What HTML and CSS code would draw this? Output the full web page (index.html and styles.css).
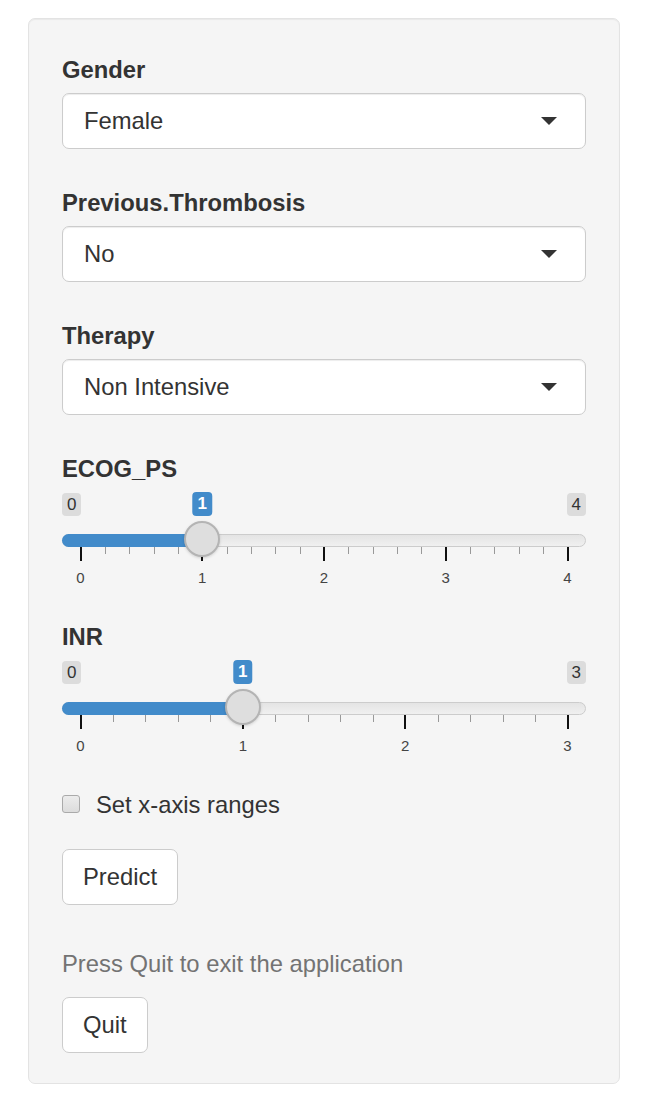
FILE: index.html
```html
<!DOCTYPE html>
<html>
<head>
    <title>Prediction Inputs</title>
    <link rel="stylesheet" href="styles.css">
</head>
<body>
    <div class="well">
        <div class="form-group">
            <label class="control-label">Gender</label>
            <div class="select"><span>Female</span><span class="caret"></span></div>
        </div>

        <div class="form-group">
            <label class="control-label">Previous.Thrombosis</label>
            <div class="select"><span>No</span><span class="caret"></span></div>
        </div>

        <div class="form-group">
            <label class="control-label">Therapy</label>
            <div class="select"><span>Non Intensive</span><span class="caret"></span></div>
        </div>

        <div class="form-group">
            <label class="control-label">ECOG_PS</label>
            <div class="slider">
                <span class="irs-min">0</span>
                <span class="irs-max">4</span>
                <div class="irs-line"></div>
                <div class="irs-bar" style="width: calc(18.5px + (100% - 37px) * 0.25)"></div>
                <div class="rail">
                    <span class="tick major" style="left: 0%"><b>0</b></span>
                    <span class="tick" style="left: 5%"></span>
                    <span class="tick" style="left: 10%"></span>
                    <span class="tick" style="left: 15%"></span>
                    <span class="tick" style="left: 20%"></span>
                    <span class="tick major" style="left: 25%"><b>1</b></span>
                    <span class="tick" style="left: 30%"></span>
                    <span class="tick" style="left: 35%"></span>
                    <span class="tick" style="left: 40%"></span>
                    <span class="tick" style="left: 45%"></span>
                    <span class="tick major" style="left: 50%"><b>2</b></span>
                    <span class="tick" style="left: 55%"></span>
                    <span class="tick" style="left: 60%"></span>
                    <span class="tick" style="left: 65%"></span>
                    <span class="tick" style="left: 70%"></span>
                    <span class="tick major" style="left: 75%"><b>3</b></span>
                    <span class="tick" style="left: 80%"></span>
                    <span class="tick" style="left: 85%"></span>
                    <span class="tick" style="left: 90%"></span>
                    <span class="tick" style="left: 95%"></span>
                    <span class="tick major" style="left: 100%"><b>4</b></span>
                    <span class="irs-single" style="left: 25%">1</span>
                    <span class="handle" style="left: 25%"></span>
                </div>
            </div>
        </div>

        <div class="form-group">
            <label class="control-label">INR</label>
            <div class="slider">
                <span class="irs-min">0</span>
                <span class="irs-max">3</span>
                <div class="irs-line"></div>
                <div class="irs-bar" style="width: calc(18.5px + (100% - 37px) * 0.3333)"></div>
                <div class="rail">
                    <span class="tick major" style="left: 0%"><b>0</b></span>
                    <span class="tick" style="left: 6.667%"></span>
                    <span class="tick" style="left: 13.333%"></span>
                    <span class="tick" style="left: 20%"></span>
                    <span class="tick" style="left: 26.667%"></span>
                    <span class="tick major" style="left: 33.333%"><b>1</b></span>
                    <span class="tick" style="left: 40%"></span>
                    <span class="tick" style="left: 46.667%"></span>
                    <span class="tick" style="left: 53.333%"></span>
                    <span class="tick" style="left: 60%"></span>
                    <span class="tick major" style="left: 66.667%"><b>2</b></span>
                    <span class="tick" style="left: 73.333%"></span>
                    <span class="tick" style="left: 80%"></span>
                    <span class="tick" style="left: 86.667%"></span>
                    <span class="tick" style="left: 93.333%"></span>
                    <span class="tick major" style="left: 100%"><b>3</b></span>
                    <span class="irs-single" style="left: 33.333%">1</span>
                    <span class="handle" style="left: 33.333%"></span>
                </div>
            </div>
        </div>

        <label class="checkbox"><span class="box"></span>Set x-axis ranges</label>

        <button class="btn btn-predict">Predict</button>

        <p class="help">Press Quit to exit the application</p>

        <button class="btn">Quit</button>
    </div>
</body>
</html>
```

FILE: styles.css
```css
body {
    margin: 0;
    font-family: "Liberation Sans", Arial, sans-serif;
    font-size: 23.8px;
    line-height: 34px;
    color: #333;
    background: #fff;
}
.well {
    width: 592px;
    box-sizing: border-box;
    margin: 18px 0 0 28px;
    padding: 34px 33px 30px;
    background: #f5f5f5;
    border: 1px solid #e3e3e3;
    border-radius: 7px;
    box-shadow: inset 0 1px 1px rgba(0, 0, 0, 0.05);
}
.form-group {
    margin-bottom: 37px;
}
.control-label {
    display: block;
    font-weight: bold;
    margin-bottom: 6px;
}
.select {
    display: flex;
    align-items: center;
    justify-content: space-between;
    height: 56px;
    box-sizing: border-box;
    padding: 0 28px 0 21px;
    background: #fff;
    border: 1px solid #ccc;
    border-radius: 7px;
    box-shadow: inset 0 1px 1px rgba(0, 0, 0, 0.075);
}
.caret {
    width: 0;
    height: 0;
    border-top: 8px solid #333;
    border-left: 8.5px solid transparent;
    border-right: 8.5px solid transparent;
}

/* range sliders */
.slider {
    position: relative;
    height: 95px;
    margin-bottom: -4px;
}
.irs-min,
.irs-max {
    position: absolute;
    top: 1px;
    padding: 0 5px;
    font-size: 17px;
    line-height: 23px;
    color: #333;
    background: rgba(0, 0, 0, 0.1);
    border-radius: 4px;
}
.irs-min {
    left: 0;
}
.irs-max {
    right: 0;
}
.irs-line {
    position: absolute;
    top: 42px;
    left: 0;
    right: 0;
    height: 13px;
    box-sizing: border-box;
    background: linear-gradient(#e4e4e4, #f0f0f0);
    border: 1px solid #ccc;
    border-radius: 7px;
}
.irs-bar {
    position: absolute;
    top: 42px;
    left: 0;
    height: 13px;
    background: #428bca;
    border-radius: 7px 0 0 7px;
}
.rail {
    position: absolute;
    top: 0;
    bottom: 0;
    left: 18.5px;
    right: 18.5px;
}
.irs-single {
    position: absolute;
    top: 0;
    transform: translateX(-50%);
    padding: 0 5px;
    font-size: 17px;
    font-weight: bold;
    line-height: 24px;
    color: #fff;
    background: #428bca;
    border-radius: 4px;
}
.handle {
    position: absolute;
    top: 29px;
    width: 36px;
    height: 36px;
    margin-left: -18px;
    box-sizing: border-box;
    background: #dedede;
    border: 2px solid #b4b4b4;
    border-radius: 50%;
    box-shadow: 0 1px 3px rgba(0, 0, 0, 0.15);
}
.tick {
    position: absolute;
    top: 55px;
    width: 1px;
    height: 7px;
    background: #999;
}
.tick.major {
    width: 2px;
    height: 14px;
    margin-left: -1px;
    background: #111;
}
.tick b {
    position: absolute;
    top: 23px;
    left: 1px;
    transform: translateX(-50%);
    font-size: 15px;
    font-weight: normal;
    line-height: 15px;
    color: #444;
}

.checkbox {
    display: flex;
    align-items: center;
    gap: 16px;
    margin-top: 31px;
}
.box {
    width: 18px;
    height: 18px;
    box-sizing: border-box;
    margin-top: -2px;
    background: linear-gradient(#ececec, #dcdcdc);
    border: 1px solid #aaa;
    border-radius: 3px;
}
.btn {
    display: block;
    padding: 10px 20px;
    font-family: inherit;
    font-size: 23.8px;
    line-height: 34px;
    color: #333;
    background: #fff;
    border: 1px solid #ccc;
    border-radius: 7px;
    cursor: pointer;
}
.btn-predict {
    margin-top: 27px;
}
.help {
    margin: 42px 0 16px;
    color: #737373;
}
```
